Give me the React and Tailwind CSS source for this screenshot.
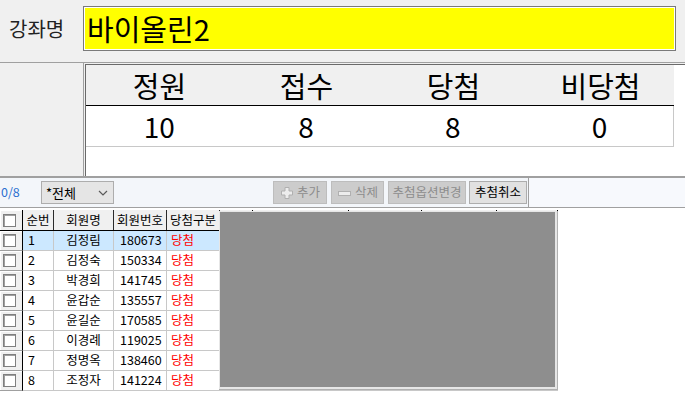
import React from "react";

const hidden = [33, 96, 73, 75, 61];
const rows = [
  ["1", "김정림", "180673"],
  ["2", "김정숙", "150334"],
  ["3", "박경희", "141745"],
  ["4", "윤갑순", "135557"],
  ["5", "윤길순", "170585"],
  ["6", "이경례", "119025"],
  ["7", "정명옥", "138460"],
  ["8", "조정자", "141224"],
];

function Check() {
  return (
    <div className="w-[13px] h-[13px] bg-white border border-[#7f7f7f] shadow-[inset_1px_1px_0_#a0a0a0]" />
  );
}

function PlusIcon() {
  return (
    <svg width="14" height="14" viewBox="0 0 14 14">
      <path d="M5 1.5h4v3.5h3.5v4H9v3.5H5V9H1.5V5H5z" fill="#ececec" stroke="#b0b0b0" strokeWidth="1" />
    </svg>
  );
}

function MinusIcon() {
  return (
    <svg width="15" height="8" viewBox="0 0 15 8">
      <rect x="1.5" y="2.5" width="12" height="4" fill="#ececec" stroke="#b0b0b0" strokeWidth="1" />
    </svg>
  );
}

export default function App() {
  return (
    <div className="w-[685px] h-[394px] bg-[#f0f0f0] overflow-hidden font-['Noto_Sans_CJK_KR',sans-serif] text-black">
      {/* course name */}
      <div className="h-[62px] flex pt-[6px]">
        <div className="w-[83px] h-[45px] flex items-center pl-[9px] text-[20px] leading-none text-[#222]">강좌명</div>
        <div className="w-[593px] h-[45px] border border-[#7a7a7a] bg-[#ffff00] shadow-[inset_0_0_0_1px_#ffffff] flex items-center pl-[3px] text-[29px] leading-none">
          바이올린2
        </div>
      </div>

      {/* stats */}
      <div className="h-[114px] border-t border-[#a0a0a0] flex">
        <div className="w-[83px]" />
        <div className="flex-1 border-l border-[#a0a0a0] pl-[1px] pt-[1px] flex">
          <div className="flex-1 bg-white border-l border-t border-[#6a6a6a]">
            <div className="w-[588px]">
              <div className="h-[41px] bg-[#f0f0f0] border-b border-black grid grid-cols-4 items-center text-[29px] leading-none text-center">
                <div>정원</div>
                <div>접수</div>
                <div>당첨</div>
                <div>비당첨</div>
              </div>
              <div className="h-[41px] border-b border-r border-[#c8c8c8] grid grid-cols-4 items-center text-[28px] leading-none text-center">
                <div>10</div>
                <div>8</div>
                <div>8</div>
                <div>0</div>
              </div>
            </div>
          </div>
        </div>
      </div>

      {/* toolbar */}
      <div className="h-[32px] border-t-2 border-b border-[#a0a0a0] flex">
        <div className="w-[529px] bg-[#f3f6fa] border-r border-[#a0a0a0] flex items-center">
          <div className="w-[41px] pl-[1px] text-[12.5px] leading-none text-[#2a6fd0]">0/8</div>
          <div className="w-[73px] h-[23px] border border-[#adadad] bg-[#e5e5e5] flex items-center justify-between pl-[4px] pr-[5px] text-[13px] leading-none">
            <span>*전체</span>
            <svg width="10" height="6" viewBox="0 0 10 6">
              <path d="M1 1l4 4 4-4" fill="none" stroke="#5a5a5a" strokeWidth="1.2" />
            </svg>
          </div>
          <div className="ml-[159px] flex gap-[4px] text-[12.5px] leading-none">
            <div className="w-[54px] h-[23px] bg-[#cccccc] border border-[#bdbdbd] flex items-center justify-center gap-[3px] text-[#8c8c8c]">
              <PlusIcon />
              <span>추가</span>
            </div>
            <div className="w-[53px] h-[23px] bg-[#cccccc] border border-[#bdbdbd] flex items-center justify-center gap-[3px] text-[#8c8c8c]">
              <MinusIcon />
              <span>삭제</span>
            </div>
            <div className="w-[78px] h-[23px] bg-[#cccccc] border border-[#bdbdbd] flex items-center justify-center text-[#8c8c8c]">
              추첨옵션변경
            </div>
            <div className="w-[58px] h-[23px] bg-[#e1e1e1] border border-[#adadad] flex items-center justify-center text-black -ml-[1px]">
              추첨취소
            </div>
          </div>
        </div>
        <div className="flex-1 bg-[#f7f9fd]" />
      </div>

      {/* grid */}
      <div className="relative h-[186px] bg-white pt-[2px] text-[12.5px] leading-none">
        <div className="w-[558px]">
          <div className="h-[21px] flex border-b border-black">
            <div className="w-[23px] h-full bg-[#f0f0f0] border-r border-black flex items-center pl-[3px] shadow-[inset_1px_1px_0_#ffffff]">
              <Check />
            </div>
            <div className="w-[31px] h-full bg-[#f0f0f0] border-r border-[#2a2a2a] flex items-center justify-center">순번</div>
            <div className="w-[60px] h-full bg-[#f0f0f0] border-r border-[#2a2a2a] flex items-center justify-center">회원명</div>
            <div className="w-[53px] h-full bg-[#f0f0f0] border-r border-[#2a2a2a] flex items-center justify-center">회원번호</div>
            <div className="w-[53px] h-full bg-[#f0f0f0] border-r border-[#2a2a2a] flex items-center justify-center">당첨구분</div>
            {hidden.map((w, i) => (
              <div key={i} style={{ width: w }} className="h-full bg-[#f0f0f0] border-r border-black" />
            ))}
          </div>
          {rows.map((r, i) => {
            const bg = i === 0 ? "bg-[#cce8ff]" : "bg-white";
            return (
              <div key={i} className="h-[20px] flex">
                <div className="w-[23px] h-full bg-[#f0f0f0] border-r border-black border-b border-b-[#a0a0a0] flex items-center pl-[3px] shadow-[inset_1px_1px_0_#ffffff]">
                  <Check />
                </div>
                <div className={`w-[31px] h-full ${bg} border-r border-b border-[#c8c8c8] flex items-center pl-[5px]`}>{r[0]}</div>
                <div className={`w-[60px] h-full ${bg} border-r border-b border-[#c8c8c8] flex items-center justify-center`}>{r[1]}</div>
                <div className={`w-[53px] h-full ${bg} border-r border-b border-[#c8c8c8] flex items-center pl-[6px]`}>{r[2]}</div>
                <div className={`w-[53px] h-full ${bg} border-r border-b border-[#c8c8c8] flex items-center pl-[4px] text-[#ff0000]`}>당첨</div>
                {hidden.map((w, j) => (
                  <div key={j} style={{ width: w }} className={`h-full ${bg} border-r border-b border-[#c8c8c8]`} />
                ))}
              </div>
            );
          })}
        </div>
        <div className="absolute left-[219px] top-[3px] w-[339px] h-[179px] bg-[#e6e6e6] border-r border-b border-[#b0b0b0] pl-[1px] pt-[1px] pr-[2px] pb-[2px]">
          <div className="w-full h-full bg-[#8e8e8e]" />
        </div>
      </div>
    </div>
  );
}
